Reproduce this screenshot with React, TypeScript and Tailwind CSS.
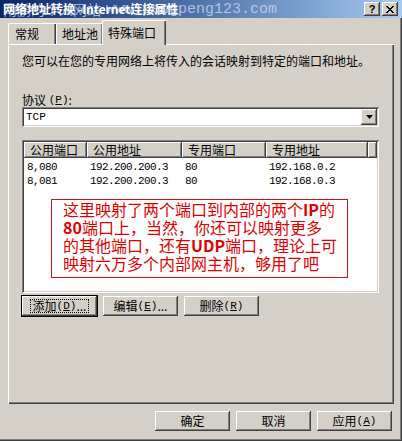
import { ReactNode } from 'react';

const raised =
  'shadow-[inset_-1px_-1px_#404040,inset_1px_1px_#ffffff,inset_-2px_-2px_#808080,inset_2px_2px_#d4d0c8]';
const sunken =
  'shadow-[inset_1px_1px_#808080,inset_-1px_-1px_#ffffff,inset_2px_2px_#404040,inset_-2px_-2px_#d4d0c8]';

const cjk = "font-['Noto_Sans_CJK_SC','Noto_Sans',sans-serif]";
const mono = "font-['Liberation_Mono','Noto_Sans_CJK_SC',monospace]";

const Btn = ({ children, w, def }: { children: ReactNode; w: string; def?: boolean }) => (
  <div className={`${w} h-[20px] ${def ? 'outline outline-1 outline-black' : ''} ${raised} bg-[#d4d0c8] flex items-center justify-center text-[12px] leading-none text-black`}>
    {def ? (
      <span className="flex items-center border border-dotted border-black px-[2px] h-[14px]">{children}</span>
    ) : (
      <span className="flex items-center h-[14px]">{children}</span>
    )}
  </div>
);

const Key = ({ k }: { k: string }) => (
  <span className={`${mono} text-[11px] leading-none`}>
    (<span className="underline">{k}</span>)
  </span>
);

const columns = [
  { label: '公用端口', w: 'w-[63px]' },
  { label: '公用地址', w: 'w-[95px]' },
  { label: '专用端口', w: 'w-[84px]' },
  { label: '专用地址', w: 'w-[102px]' },
];

const rows = [
  ['8,080', '192.200.200.3', '80', '192.168.0.2'],
  ['8,081', '192.200.200.3', '80', '192.168.0.3'],
];

export default function App() {
  return (
    <div className={`${cjk} w-[402px] h-[441px] bg-[#d4d0c8] flex flex-col shadow-[inset_-1px_-1px_#404040,inset_-2px_-2px_#808080] overflow-hidden`}>
      {/* Title bar */}
      <div className="relative h-[18px] bg-gradient-to-r from-[#0a246a] to-[#a6caf0] flex items-center pl-[3px] pr-[4px]">
        <div className="absolute left-[3px] top-0 h-[18px] flex items-center text-[#c9d6ee] opacity-80 whitespace-nowrap">
          <span className="text-[14px] leading-none">南鹏的个人网站</span>
          <span className={`${mono} text-[15px] leading-none ml-[5px]`}>www.pengpeng123.com</span>
        </div>
        <span className="relative text-white font-bold text-[12px] leading-none whitespace-nowrap">
          网络地址转换 -Internet连接属性
        </span>
        <div className="ml-auto flex gap-[2px] relative">
          <div className={`w-[16px] h-[14px] bg-[#d4d0c8] ${raised} flex items-center justify-center text-[11px] font-bold leading-none text-black font-['Liberation_Sans',sans-serif]`}>
            ?
          </div>
          <div className={`w-[16px] h-[14px] bg-[#d4d0c8] ${raised} flex items-center justify-center`}>
            <svg width="8" height="7" viewBox="0 0 8 7">
              <path d="M0 0L7 7M1 0L8 7M7 0L0 7M8 0L1 7" stroke="black" strokeWidth="1" />
            </svg>
          </div>
        </div>
      </div>

      {/* Tabs */}
      <div className="flex items-end h-[26px] ml-[8px] relative z-10">
        <div className="w-[48px] h-[21px] border-t border-l border-white shadow-[inset_-1px_0_#404040,inset_-2px_0_#808080] rounded-tl-[2px] flex items-center pl-[6px] text-[12px] text-black">
          常规
        </div>
        <div className="w-[47px] h-[21px] border-t border-l border-white shadow-[inset_-1px_0_#404040,inset_-2px_0_#808080] rounded-tl-[2px] flex items-center pl-[5px] text-[12px] text-black">
          地址池
        </div>
        <div className="w-[64px] h-[25px] -mb-[1px] -ml-[1px] bg-[#d4d0c8] border-t border-l border-white shadow-[inset_-1px_0_#404040,inset_-2px_0_#808080] rounded-tl-[2px] flex items-start pt-[3px] pl-[5px] text-[12px] text-black">
          特殊端口
        </div>
      </div>

      {/* Tab panel */}
      <div className="mx-[8px] h-[360px] border-t border-l border-white shadow-[inset_-1px_-1px_#404040,inset_-2px_-2px_#808080] flex flex-col pl-[13px] pr-[15px] text-[12px] text-black">
        <p className="mt-[9px] h-[14px] flex items-center leading-none">您可以在您的专用网络上将传入的会话映射到特定的端口和地址。</p>

        <p className="mt-[25px] h-[14px] flex items-center leading-none">
          协议&nbsp;<Key k="P" />:
        </p>
        <div className={`mt-[0px] h-[20px] bg-white ${sunken} flex items-center pl-[4px] pr-[2px]`}>
          <span className={`${mono} text-[11px] leading-none`}>TCP</span>
          <div className={`ml-auto w-[16px] h-[16px] bg-[#d4d0c8] ${raised} flex items-center justify-center`}>
            <svg width="7" height="4" viewBox="0 0 7 4">
              <path d="M0 0H7L3.5 4Z" fill="black" />
            </svg>
          </div>
        </div>

        {/* List view */}
        <div className={`mt-[13px] h-[153px] bg-white ${sunken} p-[2px] flex flex-col`}>
          <div className="flex h-[16px]">
            {columns.map((c) => (
              <div key={c.label} className={`${c.w} h-full bg-[#d4d0c8] ${raised} flex items-center pl-[6px] text-[12px] leading-none`}>
                {c.label}
              </div>
            ))}
            <div className={`flex-1 h-full bg-[#d4d0c8] ${raised}`} />
          </div>
          <div className="pt-[2px]">
            {rows.map((r) => (
              <div key={r[0]} className={`${mono} flex h-[14px] items-center text-[11px] leading-none tracking-[-0.6px] text-black`}>
                {r.map((cell, i) => (
                  <div key={i} className={`${columns[i].w} pl-[3px]`}>{cell}</div>
                ))}
              </div>
            ))}
          </div>
          <div className="mt-[11px] ml-[27px] w-[297px] h-[79px] border border-[#d01010] pl-[11px] pt-[0px] text-[16px] leading-[18px] text-[#e00000]">
            <p>这里映射了两个端口到内部的两个<b>IP</b>的</p>
            <p><b>80</b>端口上，当然，你还可以映射更多</p>
            <p>的其他端口，还有<b>UDP</b>端口，理论上可</p>
            <p>映射六万多个内部网主机，够用了吧</p>
          </div>
        </div>

        <div className="mt-[3px] flex gap-[6px]">
          <Btn w="w-[75px]" def>
            添加<Key k="D" />...
          </Btn>
          <Btn w="w-[75px]">
            编辑<Key k="E" />...
          </Btn>
          <Btn w="w-[75px]">
            删除<Key k="R" />
          </Btn>
        </div>
      </div>

      {/* Dialog buttons */}
      <div className="mt-[7px] flex justify-end gap-[6px] pr-[10px]">
        <Btn w="w-[75px]">确定</Btn>
        <Btn w="w-[75px]">取消</Btn>
        <Btn w="w-[75px]">
          应用<Key k="A" />
        </Btn>
      </div>
    </div>
  );
}
